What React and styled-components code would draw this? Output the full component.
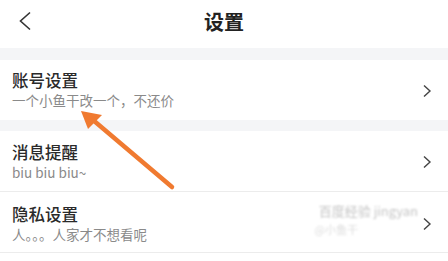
import React from 'react'
import styled, { createGlobalStyle } from 'styled-components'

const GlobalStyle = createGlobalStyle`
  html, body {
    margin: 0;
    padding: 0;
    background: #ffffff;
  }
  body {
    font-family: "Noto Sans CJK SC", "Noto Sans", sans-serif;
  }
`

const rows = [
  { title: '账号设置', sub: '一个小鱼干改一个，不还价' },
  { title: '消息提醒', sub: 'biu biu biu~' },
  { title: '隐私设置', sub: '人。。。人家才不想看呢', mark: true },
]

export default function App() {
  return (
    <>
      <GlobalStyle />
      <Page>
        <Header>
          <BackButton>
            <svg width="14" height="20" viewBox="0 0 14 20">
              <path d="M12 1.5 L2.5 10 L12 18.5" fill="none" stroke="#333" strokeWidth="1.6" />
            </svg>
          </BackButton>
          <Title>设置</Title>
        </Header>
        <Band />
        <Row>
          <RowText>
            <RowTitle>{rows[0].title}</RowTitle>
            <RowSub>{rows[0].sub}</RowSub>
          </RowText>
          <Chevron />
        </Row>
        <Band $h={11} />
        {rows.slice(1).map((row, i) => (
          <Row key={i} $divider $pad={i === 0 ? 10 : 11}>
            <RowText>
              <RowTitle>{row.title}</RowTitle>
              <RowSub>{row.sub}</RowSub>
            </RowText>
            {row.mark && <Watermark>百度经验 jingyan<br /><small>@小鱼干</small></Watermark>}
            <Chevron />
          </Row>
        ))}
        <Arrow viewBox="0 0 448 261" width="448" height="261">
          <line x1="172" y1="187" x2="93" y2="120" stroke="#f07a30" strokeWidth="4.5" strokeLinecap="round" />
          <polygon points="81,111 102,115 88,129" fill="#f07a30" />
        </Arrow>
      </Page>
    </>
  )
}

function Chevron() {
  return (
    <ChevronBox>
      <svg width="10" height="14" viewBox="0 0 10 14">
        <path d="M2 1.5 L8 7 L2 12.5" fill="none" stroke="#444" strokeWidth="1.4" />
      </svg>
    </ChevronBox>
  )
}

// Styled Components
const Page = styled.div`
  position: relative;
  width: 448px;
  height: 261px;
  overflow: hidden;
  background: #fff;
`

const Header = styled.div`
  height: 48px;
  display: flex;
  align-items: center;
  justify-content: center;
  position: relative;
`

const BackButton = styled.div`
  position: absolute;
  left: 18px;
  top: 11px;
  display: flex;
`

const Title = styled.h1`
  margin: 0;
  font-size: 20px;
  font-weight: 700;
  color: #222;
  line-height: 24px;
  margin-top: -5px;
`

const Band = styled.div`
  height: ${(p) => p.$h || 12}px;
  background: #f4f5f7;
`

const Row = styled.div`
  height: ${(p) => (p.$divider ? 61 : 60)}px;
  box-sizing: border-box;
  display: flex;
  align-items: flex-start;
  padding: ${(p) => p.$pad || 9}px 16px 0 12px;
  border-bottom: ${(p) => (p.$divider ? '1px solid #ececec' : 'none')};
  position: relative;
`

const RowText = styled.div`
  flex: 1;
  display: flex;
  flex-direction: column;
`

const RowTitle = styled.div`
  font-size: 16.5px;
  line-height: 23px;
  font-weight: 500;
  color: #2a2a2a;
`

const RowSub = styled.div`
  font-size: 13.5px;
  line-height: 19px;
  color: #8a8a8a;
  margin-top: -1px;
`

const ChevronBox = styled.div`
  display: flex;
  align-self: center;
  margin-top: -8px;
`

const Watermark = styled.div`
  position: absolute;
  right: 30px;
  top: 10px;
  font-size: 13px;
  line-height: 18px;
  color: #c4c4c4;
  filter: blur(0.9px);
  text-align: right;
  small {
    font-size: 11px;
    color: #dcdcdc;
    margin-right: 60px;
  }
`

const Arrow = styled.svg`
  position: absolute;
  left: 0;
  top: 0;
  pointer-events: none;
`
